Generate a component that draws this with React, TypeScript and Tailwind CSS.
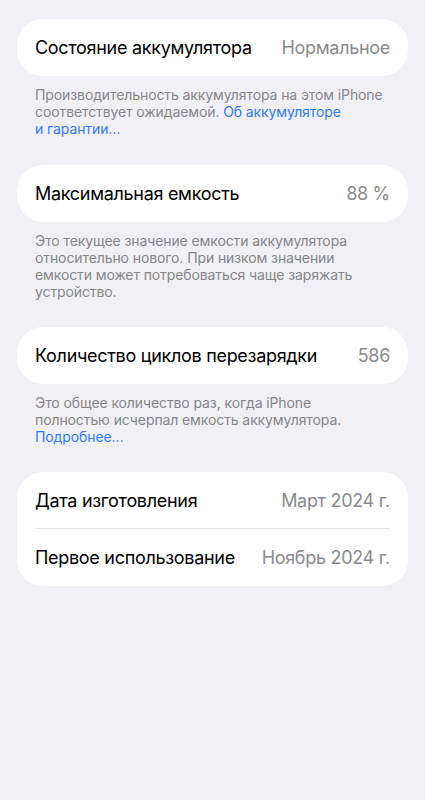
import React from "react";

function Card({ children }: { children: React.ReactNode }) {
  return <div className="bg-white rounded-[26px] px-[18px]">{children}</div>;
}

function Row({ label, value, border }: { label: string; value: string; border?: boolean }) {
  return (
    <div className={"flex items-center justify-between h-[57px] " + (border ? "border-b border-[#e3e3e8]" : "")}>
      <span className="text-[18px] text-black tracking-[-0.3px]">{label}</span>
      <span className="text-[18px] text-[#8a8a8e] tracking-[-0.3px]">{value}</span>
    </div>
  );
}

function Footer({ children }: { children: React.ReactNode }) {
  return (
    <p className="pl-[18px] pr-[23px] pt-[10px] text-[14px] leading-[17px] text-[#86868b] tracking-[-0.1px]">{children}</p>
  );
}

export default function App() {
  return (
    <div
      className="min-h-[800px] w-full bg-[#f1f0f5] px-[17px] pt-[19px]"
      style={{ fontFamily: "Inter, 'Noto Sans', sans-serif" }}
    >
      <Card>
        <Row label="Состояние аккумулятора" value="Нормальное" />
      </Card>
      <Footer>
        Производительность аккумулятора на этом iPhone соответствует ожидаемой.{" "}
        <span className="text-[#2f7bf5]">Об аккумуляторе и&nbsp;гарантии…</span>
      </Footer>

      <div className="h-[28px]" />
      <Card>
        <Row label="Максимальная емкость" value="88 %" />
      </Card>
      <Footer>
        Это текущее значение емкости аккумулятора относительно нового. При низком значении емкости может потребоваться чаще заряжать устройство.
      </Footer>

      <div className="h-[27px]" />
      <Card>
        <Row label="Количество циклов перезарядки" value="586" />
      </Card>
      <Footer>
        Это общее количество раз, когда iPhone полностью исчерпал емкость аккумулятора.{" "}
        <span className="text-[#2f7bf5]">Подробнее…</span>
      </Footer>

      <div className="h-[27px]" />
      <Card>
        <Row label="Дата изготовления" value="Март 2024 г." border />
        <Row label="Первое использование" value="Ноябрь 2024 г." />
      </Card>
    </div>
  );
}
